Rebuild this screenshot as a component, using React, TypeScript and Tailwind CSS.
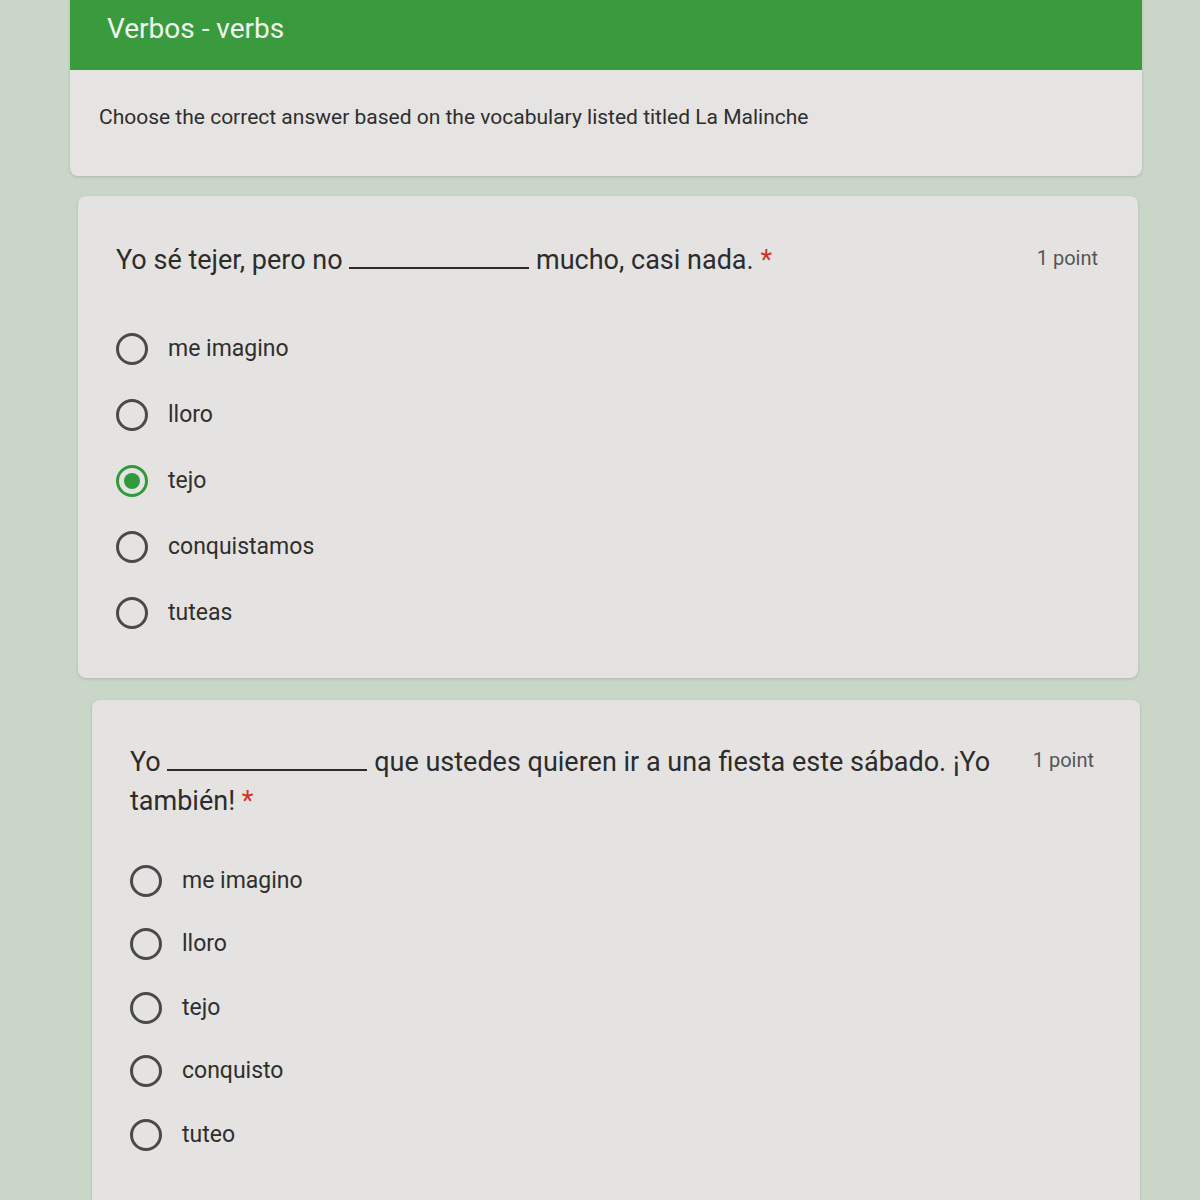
import React from "react";

type Question = {
  before: string;
  after: string;
  blank: number;
  options: string[];
  selected?: number;
};

const questions: Question[] = [
  {
    before: "Yo sé tejer, pero no",
    after: "mucho, casi nada.",
    blank: 180,
    options: ["me imagino", "lloro", "tejo", "conquistamos", "tuteas"],
    selected: 2,
  },
  {
    before: "Yo",
    after: "que ustedes quieren ir a una fiesta este sábado. ¡Yo también!",
    blank: 200,
    options: ["me imagino", "lloro", "tejo", "conquisto", "tuteo"],
  },
];

function Radio({ checked }: { checked?: boolean }) {
  if (checked) {
    return (
      <span className="flex h-[32px] w-[32px] shrink-0 items-center justify-center rounded-full border-[3px] border-[#2f9a3b]">
        <span className="h-[16px] w-[16px] rounded-full bg-[#2f9a3b]" />
      </span>
    );
  }
  return <span className="h-[32px] w-[32px] shrink-0 rounded-full border-[3px] border-[#4a4a4a]" />;
}

function QuestionCard({ q, className, optionsClass }: { q: Question; className: string; optionsClass: string }) {
  return (
    <div className={`rounded-lg bg-[#e5e3e1] shadow-[0_1px_3px_rgba(0,0,0,0.15)] ${className}`}>
      <div className="flex items-start justify-between">
        <div className="w-[872px] text-[27px] leading-[39px] text-[#2c2c2c]">
          {q.before}{" "}
          <span className="inline-block border-b-2 border-[#2c2c2c]" style={{ width: q.blank }} />{" "}
          {q.after} <span className="text-[#d93025]">*</span>
        </div>
        <div className="pt-[2px] text-[20px] text-[#555]">1 point</div>
      </div>
      <div className={`flex flex-col ${optionsClass}`}>
        {q.options.map((opt, i) => (
          <label key={opt} className="flex items-center gap-[20px]">
            <Radio checked={q.selected === i} />
            <span className="text-[23px] leading-[32px] text-[#2f2f2f]">{opt}</span>
          </label>
        ))}
      </div>
    </div>
  );
}

export default function App() {
  return (
    <div className="min-h-[1200px] w-[1200px] overflow-hidden bg-[#cad6c8] font-['Roboto',sans-serif]">
      {/* Form header */}
      <div className="ml-[70px] w-[1072px] overflow-hidden rounded-b-lg bg-[#e6e4e2] shadow-[0_1px_3px_rgba(0,0,0,0.15)]">
        <div className="flex h-[70px] items-center bg-[#3a9b3e] pb-[12px] pl-[37px] text-[28px] text-[#f1f6ef]">
          Verbos - verbs
        </div>
        <div className="px-[29px] pt-[32px] pb-[42px] text-[21px] text-[#2e2e2e]">
          Choose the correct answer based on the vocabulary listed titled La Malinche
        </div>
      </div>

      {/* Questions */}
      <QuestionCard
        q={questions[0]}
        optionsClass="mt-[53px] gap-[34px]"
        className="mt-[20px] ml-[78px] w-[1060px] pt-[45px] pb-[49px] pl-[38px] pr-[40px]"
      />
      <QuestionCard
        q={questions[1]}
        optionsClass="mt-[44px] gap-[31.5px]"
        className="mt-[22px] ml-[92px] w-[1048px] pt-[43px] pb-[60px] pl-[38px] pr-[46px]"
      />
    </div>
  );
}
